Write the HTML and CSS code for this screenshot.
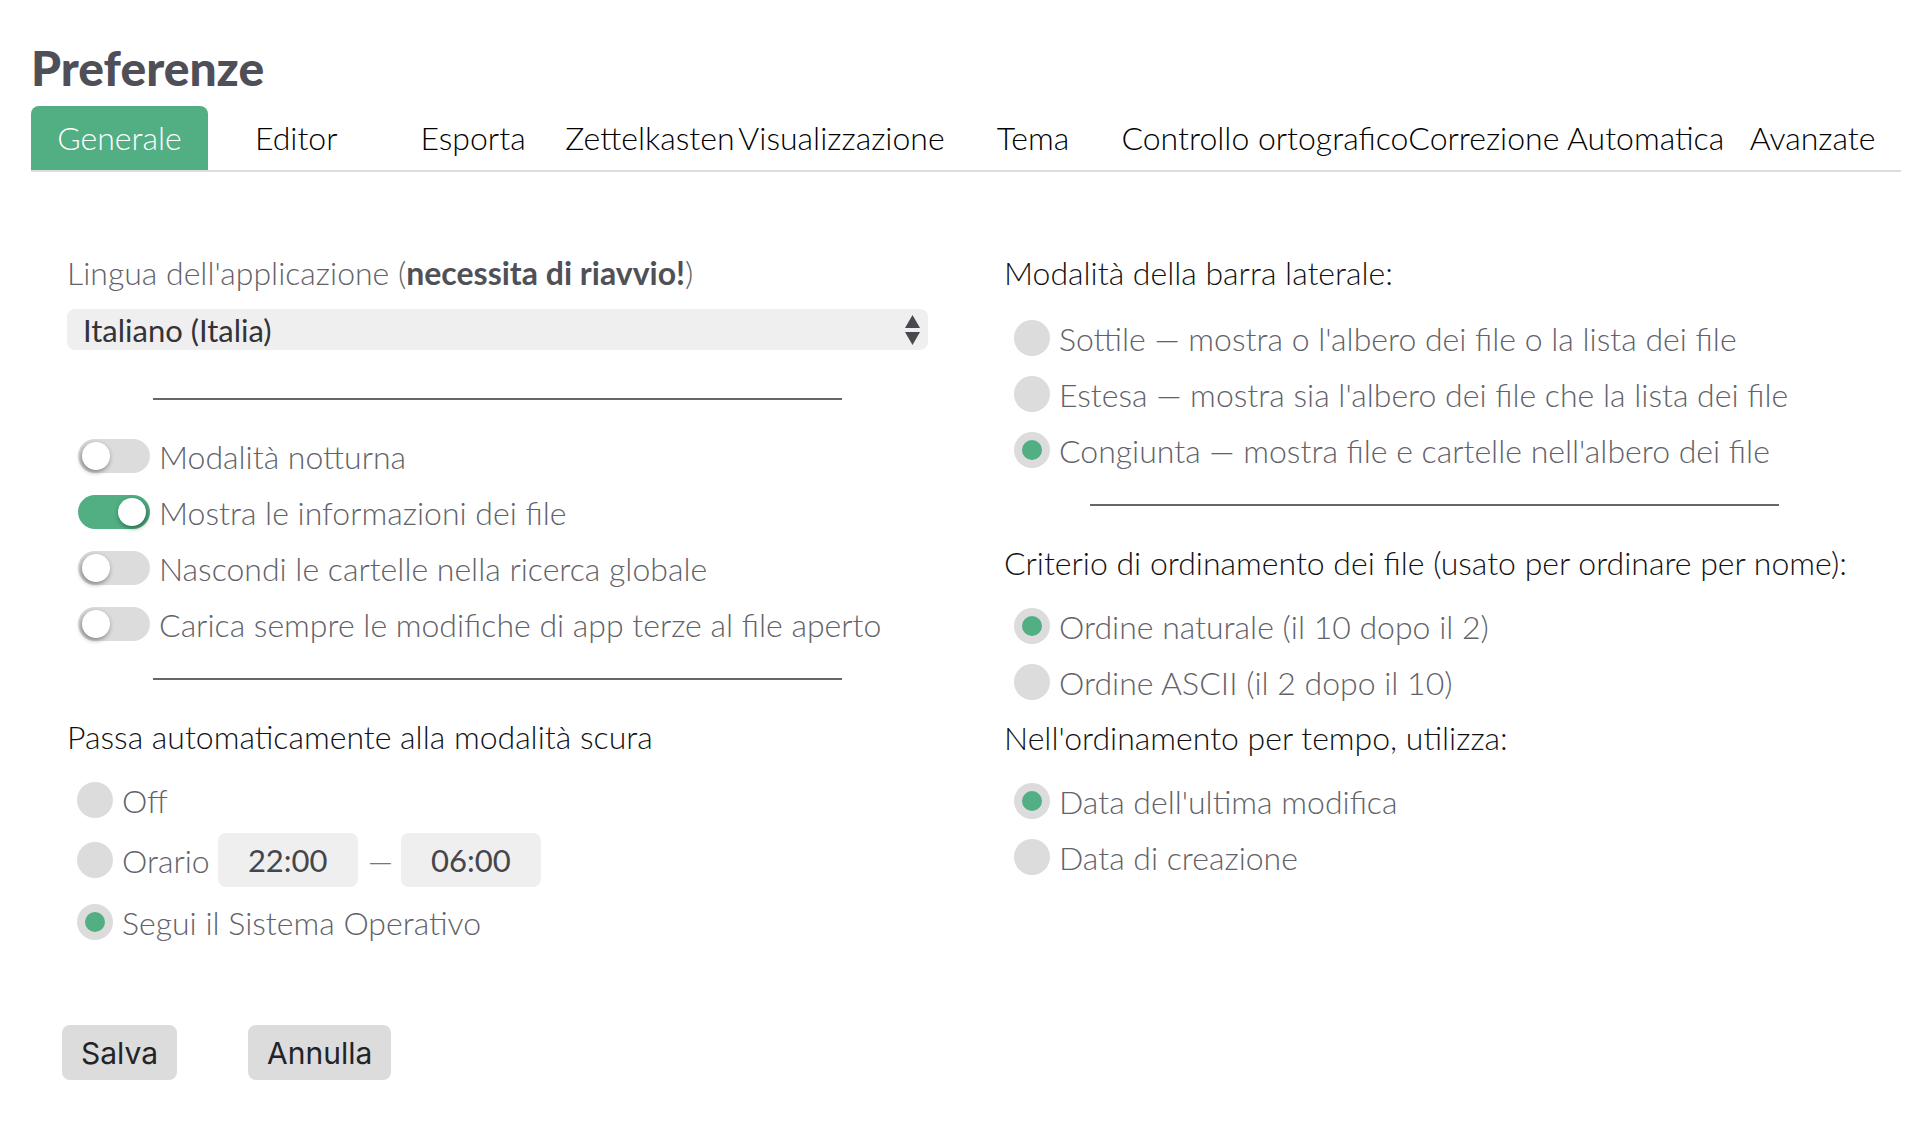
FILE: index.html
```html
<!DOCTYPE html>
<html lang="it">
<head>
<meta charset="utf-8">
<title>Preferenze</title>
<link rel="stylesheet" href="styles.css">
</head>
<body>
<div class="page">
  <h1 class="title">Preferenze</h1>
  <div class="tabs">
    <div class="tab active">Generale</div>
    <div class="tab">Editor</div>
    <div class="tab">Esporta</div>
    <div class="tab">Zettelkasten</div>
    <div class="tab">Visualizzazione</div>
    <div class="tab">Tema</div>
    <div class="tab">Controllo ortografico</div>
    <div class="tab">Correzione Automatica</div>
    <div class="tab">Avanzate</div>
  </div>

  <div class="content">
    <div class="col">
      <div class="field-label">Lingua dell'applicazione (<b>necessita di riavvio!</b>)</div>
      <div class="select">
        <span>Italiano (Italia)</span>
        <svg class="select-arrows" width="15" height="30" viewBox="0 0 15 30"><path d="M7.5 0 L15 13 L0 13 Z" fill="#48484f"/><path d="M0 17 L15 17 L7.5 30 Z" fill="#48484f"/></svg>
      </div>
      <hr class="sep sep-a">
      <div class="toggles">
        <div class="toggle-row"><span class="toggle"><span class="knob"></span></span><span class="lbl">Modalità notturna</span></div>
        <div class="toggle-row"><span class="toggle on"><span class="knob"></span></span><span class="lbl">Mostra le informazioni dei file</span></div>
        <div class="toggle-row"><span class="toggle"><span class="knob"></span></span><span class="lbl">Nascondi le cartelle nella ricerca globale</span></div>
        <div class="toggle-row"><span class="toggle"><span class="knob"></span></span><span class="lbl">Carica sempre le modifiche di app terze al file aperto</span></div>
      </div>
      <hr class="sep sep-b">
      <div class="heading">Passa automaticamente alla modalità scura</div>
      <div class="radio-row"><span class="radio"></span><span class="lbl">Off</span></div>
      <div class="radio-row tall"><span class="radio"></span><span class="lbl">Orario</span><span class="time">22:00</span><span class="dash">—</span><span class="time">06:00</span></div>
      <div class="radio-row"><span class="radio checked"></span><span class="lbl">Segui il Sistema Operativo</span></div>
    </div>

    <div class="col">
      <div class="heading first">Modalità della barra laterale:</div>
      <div class="radio-row"><span class="radio"></span><span class="lbl">Sottile — mostra o l'albero dei file o la lista dei file</span></div>
      <div class="radio-row"><span class="radio"></span><span class="lbl">Estesa — mostra sia l'albero dei file che la lista dei file</span></div>
      <div class="radio-row"><span class="radio checked"></span><span class="lbl">Congiunta — mostra file e cartelle nell'albero dei file</span></div>
      <hr class="sep sep-c">
      <div class="heading">Criterio di ordinamento dei file (usato per ordinare per nome):</div>
      <div class="radio-row"><span class="radio checked"></span><span class="lbl">Ordine naturale (il 10 dopo il 2)</span></div>
      <div class="radio-row"><span class="radio"></span><span class="lbl">Ordine ASCII (il 2 dopo il 10)</span></div>
      <div class="heading close">Nell'ordinamento per tempo, utilizza:</div>
      <div class="radio-row"><span class="radio checked"></span><span class="lbl">Data dell'ultima modifica</span></div>
      <div class="radio-row"><span class="radio"></span><span class="lbl">Data di creazione</span></div>
    </div>
  </div>

  <div class="actions">
    <button class="btn">Salva</button>
    <button class="btn">Annulla</button>
  </div>
</div>
</body>
</html>
```

FILE: styles.css
```css
html, body {
  margin: 0;
  padding: 0;
  background: #ffffff;
}

body {
  font-family: Lato, "Noto Sans", sans-serif;
}

.page {
  padding: 0 17px 0 31px;
}

.title {
  font-family: Lato, sans-serif;
  font-weight: 900;
  font-size: 48px;
  line-height: 58px;
  color: #4f4f57;
  margin: 39px 0 9px;
}

.tabs {
  display: flex;
  border-bottom: 2px solid #dddddd;
}

.tab {
  flex: 1 1 0;
  white-space: nowrap;
  text-align: center;
  font-weight: 300;
  font-size: 32px;
  line-height: 64px;
  color: #000;
  padding: 0;
  border-radius: 8px 8px 0 0;
}

.tab.active {
  background: #52ae83;
  color: #fff;
}

.content {
  display: grid;
  grid-template-columns: 1fr 1fr;
  column-gap: 76px;
  padding: 81px 36px 0;
}

.col {
  display: flex;
  flex-direction: column;
}

.field-label {
  font-weight: 300;
  font-size: 32px;
  line-height: 40px;
  color: #626269;
}

.field-label b {
  font-weight: 700;
  color: #505057;
}

.select {
  margin-top: 16px;
  height: 41px;
  background: #efefef;
  border-radius: 8px;
  display: flex;
  align-items: center;
  justify-content: space-between;
  padding: 0 8px 0 16px;
  font-weight: 400;
  font-size: 31px;
  color: #333338;
}

.select-arrows {
  display: block;
}

.sep {
  border: 0;
  height: 2px;
  background: #66666b;
  width: 80%;
  margin: 0 auto;
}

.sep-a { margin-top: 48px; }
.sep-b { margin-top: 26px; }
.sep-c { margin-top: 26px; }

.toggles {
  margin-top: 28px;
}

.toggle-row {
  height: 56px;
  display: flex;
  align-items: center;
}

.toggle {
  position: relative;
  width: 72px;
  height: 34px;
  border-radius: 17px;
  background: #dcdcdc;
  margin: 0 9px 0 11px;
  flex: none;
}

.toggle.on {
  background: #52ae83;
}

.knob {
  position: absolute;
  top: 3px;
  left: 4px;
  width: 28px;
  height: 28px;
  border-radius: 50%;
  background: #fff;
  box-shadow: -1px 2px 5px rgba(0, 0, 0, 0.45);
}

.toggle.on .knob {
  left: auto;
  right: 4px;
  box-shadow: 1px 2px 5px rgba(0, 40, 20, 0.55);
}

.lbl {
  font-weight: 300;
  font-size: 32px;
  color: #626269;
  white-space: nowrap;
}

.heading {
  font-weight: 300;
  font-size: 32px;
  line-height: 40px;
  color: #111114;
  margin: 37px 0 15px;
  white-space: nowrap;
}

.heading.first {
  margin: 0 0 17px;
}

.heading.close {
  margin: 8px 0 15px;
}

.radio-row {
  height: 56px;
  display: flex;
  align-items: center;
}

.radio-row.tall {
  height: 64px;
  margin-bottom: 2px;
}

.radio {
  width: 36px;
  height: 36px;
  border-radius: 50%;
  background: #dcdcdc;
  margin: 0 9px 0 10px;
  flex: none;
  display: flex;
  align-items: center;
  justify-content: center;
}

.radio.checked::after {
  content: "";
  width: 20px;
  height: 20px;
  border-radius: 50%;
  background: #52ae83;
}

.time {
  width: 140px;
  height: 54px;
  margin-left: 8px;
  background: #efefef;
  border-radius: 8px;
  display: flex;
  align-items: center;
  justify-content: center;
  font-weight: 400;
  font-size: 31px;
  color: #45454c;
}

.dash {
  font-weight: 300;
  font-size: 32px;
  color: #77777e;
  margin: 0 0 0 10px;
}

.actions {
  display: flex;
  gap: 71px;
  padding-left: 31px;
  margin-top: 75px;
}

.btn {
  font-family: Inter, "Liberation Sans", sans-serif;
  font-size: 30px;
  font-weight: 400;
  color: #232328;
  background: #dcdcdc;
  border: 0;
  border-radius: 8px;
  height: 55px;
  padding: 0 19px;
}
```
